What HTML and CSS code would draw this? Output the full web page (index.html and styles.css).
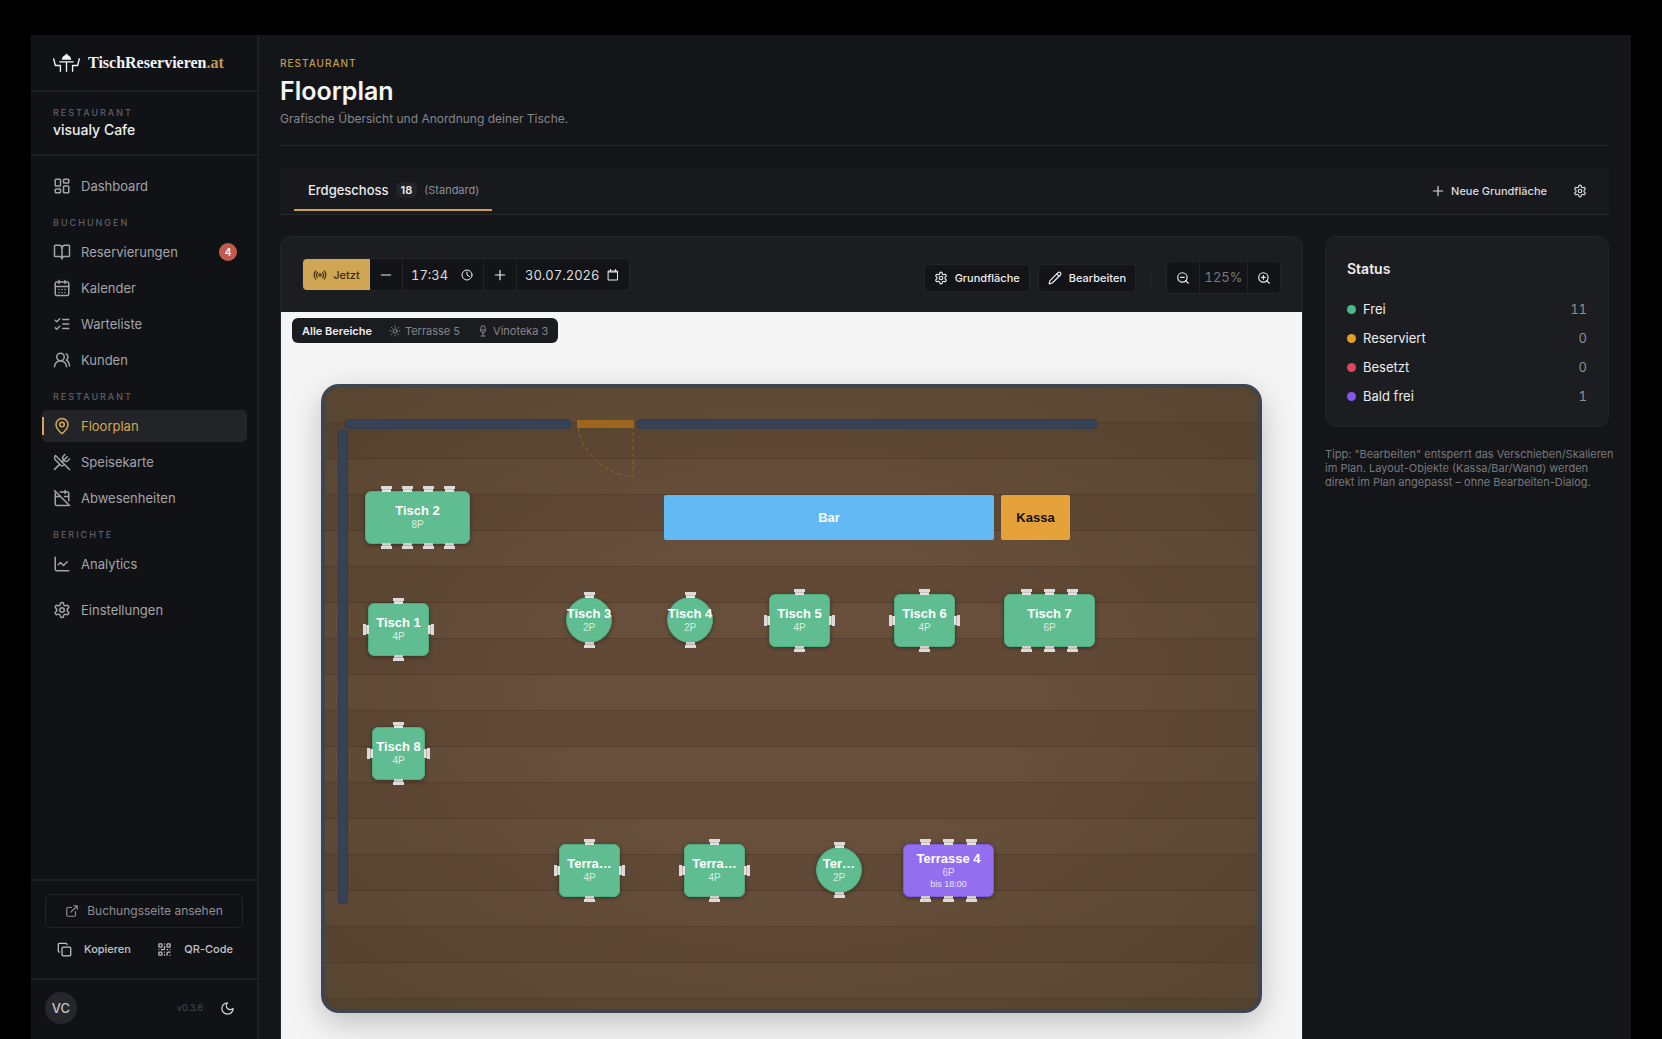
FILE: index.html
```html
<!DOCTYPE html>
<html lang="de">
<head>
    <meta charset="UTF-8">
    <meta name="viewport" content="width=device-width, initial-scale=1.0">
    <title>Floorplan - TischReservieren.at</title>
    <link rel="stylesheet" href="styles.css">
</head>
<body>

<!-- Icons -->
<svg class="sprite" aria-hidden="true">
    <symbol id="i-dashboard" viewBox="0 0 24 24"><rect x="3" y="3" width="7" height="9" rx="1"/><rect x="14" y="3" width="7" height="5" rx="1"/><rect x="14" y="12" width="7" height="9" rx="1"/><rect x="3" y="16" width="7" height="5" rx="1"/></symbol>
    <symbol id="i-book" viewBox="0 0 24 24"><path d="M12 7v14"/><path d="M3 18a1 1 0 0 1-1-1V4a1 1 0 0 1 1-1h5a4 4 0 0 1 4 4 4 4 0 0 1 4-4h5a1 1 0 0 1 1 1v13a1 1 0 0 1-1 1h-6a3 3 0 0 0-3 3 3 3 0 0 0-3-3z"/></symbol>
    <symbol id="i-calendar" viewBox="0 0 24 24"><path d="M8 2v4M16 2v4"/><rect x="3" y="4" width="18" height="18" rx="2"/><path d="M3 10h18M8 14h.01M12 14h.01M16 14h.01M8 18h.01M12 18h.01M16 18h.01"/></symbol>
    <symbol id="i-list" viewBox="0 0 24 24"><path d="m3 17 2 2 4-4M3 7l2 2 4-4M13 6h8M13 12h8M13 18h8"/></symbol>
    <symbol id="i-users" viewBox="0 0 24 24"><path d="M18 21a8 8 0 0 0-16 0"/><circle cx="10" cy="8" r="5"/><path d="M22 20c0-3.37-2-6.5-4-8a5 5 0 0 0-.45-8.3"/></symbol>
    <symbol id="i-pin" viewBox="0 0 24 24"><path d="M20 10c0 4.993-5.539 10.193-7.399 11.799a1 1 0 0 1-1.202 0C9.539 20.193 4 14.993 4 10a8 8 0 0 1 16 0"/><circle cx="12" cy="10" r="3"/></symbol>
    <symbol id="i-utensils" viewBox="0 0 24 24"><path d="m16 2-2.3 2.3a3 3 0 0 0 0 4.2l1.8 1.8a3 3 0 0 0 4.2 0L22 8"/><path d="M15 15 3.3 3.3a4.2 4.2 0 0 0 0 6l7.3 7.3c.7.7 2 .7 2.8 0L15 15Zm0 0 7 7"/><path d="m2.100 21.800 6.400-6.300M19 5l-7 7"/></symbol>
    <symbol id="i-calendar-off" viewBox="0 0 24 24"><path d="M4.200 4.200A2 2 0 0 0 3 6v14a2 2 0 0 0 2 2h14a2 2 0 0 0 1.820-1.180M21 15.500V6a2 2 0 0 0-2-2H9.500M16 2v4M3 10h7M21 10h-5.500M2 2l20 20"/></symbol>
    <symbol id="i-chart" viewBox="0 0 24 24"><path d="M3 3v16a2 2 0 0 0 2 2h16"/><path d="m19 9-5 5-4-4-3 3"/></symbol>
    <symbol id="i-settings" viewBox="0 0 24 24"><path d="M12.220 2h-.44a2 2 0 0 0-2 2v.18a2 2 0 0 1-1 1.730l-.43.25a2 2 0 0 1-2 0l-.15-.08a2 2 0 0 0-2.730.73l-.22.38a2 2 0 0 0 .73 2.730l.15.1a2 2 0 0 1 1 1.720v.51a2 2 0 0 1-1 1.740l-.15.09a2 2 0 0 0-.73 2.730l.22.38a2 2 0 0 0 2.730.73l.15-.08a2 2 0 0 1 2 0l.43.25a2 2 0 0 1 1 1.730V20a2 2 0 0 0 2 2h.44a2 2 0 0 0 2-2v-.18a2 2 0 0 1 1-1.730l.43-.25a2 2 0 0 1 2 0l.15.08a2 2 0 0 0 2.730-.73l.22-.39a2 2 0 0 0-.73-2.730l-.15-.08a2 2 0 0 1-1-1.740v-.5a2 2 0 0 1 1-1.740l.15-.09a2 2 0 0 0 .73-2.730l-.22-.38a2 2 0 0 0-2.730-.73l-.15.08a2 2 0 0 1-2 0l-.43-.25a2 2 0 0 1-1-1.730V4a2 2 0 0 0-2-2z"/><circle cx="12" cy="12" r="3"/></symbol>
    <symbol id="i-external" viewBox="0 0 24 24"><path d="M15 3h6v6M10 14 21 3M18 13v6a2 2 0 0 1-2 2H5a2 2 0 0 1-2-2V8a2 2 0 0 1 2-2h6"/></symbol>
    <symbol id="i-copy" viewBox="0 0 24 24"><rect x="8" y="8" width="14" height="14" rx="2"/><path d="M4 16c-1.100 0-2-.9-2-2V4c0-1.100.9-2 2-2h10c1.100 0 2 .9 2 2"/></symbol>
    <symbol id="i-qr" viewBox="0 0 24 24"><rect x="3" y="3" width="5" height="5" rx="1"/><rect x="16" y="3" width="5" height="5" rx="1"/><rect x="3" y="16" width="5" height="5" rx="1"/><path d="M21 16h-3a2 2 0 0 0-2 2v3M21 21v.01M12 7v3a2 2 0 0 1-2 2H7M3 12h.01M12 3h.01M12 16v.01M16 12h1M21 12v.01M12 21v-1"/></symbol>
    <symbol id="i-moon" viewBox="0 0 24 24"><path d="M12 3a6 6 0 0 0 9 9 9 9 0 1 1-9-9"/></symbol>
    <symbol id="i-plus" viewBox="0 0 24 24"><path d="M4 12h16M12 4v16"/></symbol>
    <symbol id="i-minus" viewBox="0 0 24 24"><path d="M4 12h16"/></symbol>
    <symbol id="i-live" viewBox="0 0 24 24"><path d="M4.900 19.100C1 15.200 1 8.800 4.900 4.900M7.800 16.200c-2.300-2.300-2.300-6.100 0-8.500M16.200 7.800c2.300 2.300 2.300 6.100 0 8.500M19.100 4.900C23 8.800 23 15.100 19.100 19"/><circle cx="12" cy="12" r="2"/></symbol>
    <symbol id="i-clock" viewBox="0 0 24 24"><circle cx="12" cy="12" r="10"/><path d="M12 6v6l5 3"/></symbol>
    <symbol id="i-date" viewBox="0 0 24 24"><path d="M3 4h18v18H3zM3 6h18M7 1v4M17 1v4"/></symbol>
    <symbol id="i-pencil" viewBox="0 0 24 24"><path d="M21.170 6.810a1 1 0 0 0-3.990-3.990L3.840 16.170a2 2 0 0 0-.5.83l-1.320 4.350a.5.5 0 0 0 .62.62l4.350-1.320a2 2 0 0 0 .83-.5z"/><path d="m15 5 4 4"/></symbol>
    <symbol id="i-zoom-out" viewBox="0 0 24 24"><circle cx="11" cy="11" r="8"/><path d="m21 21-4.350-4.350M8 11h6"/></symbol>
    <symbol id="i-zoom-in" viewBox="0 0 24 24"><circle cx="11" cy="11" r="8"/><path d="m21 21-4.350-4.350M11 8v6M8 11h6"/></symbol>
    <symbol id="i-sun" viewBox="0 0 24 24"><circle cx="12" cy="12" r="4"/><path d="M12 2v2M12 20v2M4.930 4.930l1.410 1.410M17.660 17.660l1.410 1.410M2 12h2M20 12h2M6.340 17.660l-1.410 1.410M19.070 4.930l-1.410 1.410"/></symbol>
    <symbol id="i-wine" viewBox="0 0 24 24"><path d="M8 22h8M7 10h10M12 15v7M12 15a5 5 0 0 0 5-5c0-2-.5-4-2-8H9c-1.500 4-2 6-2 8a5 5 0 0 0 5 5Z"/></symbol>
</svg>

<div class="app">
    <aside class="sidebar">
        <a class="brand" href="#">
            <svg class="brand-icon" viewBox="0 0 80 56" aria-hidden="true">
                <path d="M2 17 7 37H22V54M78 17 73 37H58V54M20 26H60M40 26V54" fill="none" stroke="currentColor" stroke-width="4" stroke-linecap="round" stroke-linejoin="round"/>
                <path d="M26 20a14 14 0 0 1 28 0z"/>
                <circle cx="40" cy="5" r="3"/>
            </svg>
            <span>TischReservieren<span class="brand-tld">.at</span></span>
        </a>
        <div class="location">
            <div class="label">Restaurant</div>
            <div class="location-name">visualy Cafe</div>
        </div>
        <nav class="nav">
            <a class="nav-item" href="#"><svg class="icon"><use href="#i-dashboard"/></svg>Dashboard</a>
            <div class="label">Buchungen</div>
            <a class="nav-item" href="#"><svg class="icon"><use href="#i-book"/></svg>Reservierungen<span class="count">4</span></a>
            <a class="nav-item" href="#"><svg class="icon"><use href="#i-calendar"/></svg>Kalender</a>
            <a class="nav-item" href="#"><svg class="icon"><use href="#i-list"/></svg>Warteliste</a>
            <a class="nav-item" href="#"><svg class="icon"><use href="#i-users"/></svg>Kunden</a>
            <div class="label">Restaurant</div>
            <a class="nav-item active" href="#"><svg class="icon"><use href="#i-pin"/></svg>Floorplan</a>
            <a class="nav-item" href="#"><svg class="icon"><use href="#i-utensils"/></svg>Speisekarte</a>
            <a class="nav-item" href="#"><svg class="icon"><use href="#i-calendar-off"/></svg>Abwesenheiten</a>
            <div class="label">Berichte</div>
            <a class="nav-item" href="#"><svg class="icon"><use href="#i-chart"/></svg>Analytics</a>
            <a class="nav-item nav-settings" href="#"><svg class="icon"><use href="#i-settings"/></svg>Einstellungen</a>
        </nav>
        <div class="share">
            <a class="booking-link" href="#"><svg class="icon"><use href="#i-external"/></svg>Buchungsseite ansehen</a>
            <div class="share-row">
                <button type="button"><svg class="icon"><use href="#i-copy"/></svg>Kopieren</button>
                <button type="button"><svg class="icon"><use href="#i-qr"/></svg>QR-Code</button>
            </div>
        </div>
        <div class="account">
            <span class="avatar">VC</span>
            <span class="version">v0.3.6</span>
            <button type="button" class="theme" aria-label="Design wechseln"><svg class="icon"><use href="#i-moon"/></svg></button>
        </div>
    </aside>

    <main class="main">
        <header class="page-header">
            <div class="eyebrow">Restaurant</div>
            <h1>Floorplan</h1>
            <p>Grafische Übersicht und Anordnung deiner Tische.</p>
        </header>

        <div class="tabs">
            <button type="button" class="tab">Erdgeschoss <span class="tab-count">18</span> <span class="tab-note">(Standard)</span></button>
            <div class="tabs-actions">
                <button type="button"><svg class="icon"><use href="#i-plus"/></svg>Neue Grundfläche</button>
                <button type="button" aria-label="Einstellungen"><svg class="icon"><use href="#i-settings"/></svg></button>
            </div>
        </div>

        <div class="content">
            <section class="plan">
                <div class="toolbar">
                    <div class="time-group">
                        <button type="button" class="now"><svg class="icon"><use href="#i-live"/></svg>Jetzt</button>
                        <button type="button" class="step" aria-label="Früher"><svg class="icon"><use href="#i-minus"/></svg></button>
                        <label class="field field-time"><input type="text" value="17:34" aria-label="Uhrzeit"><svg class="icon"><use href="#i-clock"/></svg></label>
                        <button type="button" class="step" aria-label="Später"><svg class="icon"><use href="#i-plus"/></svg></button>
                        <label class="field field-date"><input type="text" value="30.07.2026" aria-label="Datum"><svg class="icon"><use href="#i-date"/></svg></label>
                    </div>
                    <div class="tools">
                        <button type="button" class="tool"><svg class="icon"><use href="#i-settings"/></svg>Grundfläche</button>
                        <button type="button" class="tool"><svg class="icon"><use href="#i-pencil"/></svg>Bearbeiten</button>
                        <span class="divider"></span>
                        <div class="zoom">
                            <button type="button" aria-label="Verkleinern"><svg class="icon"><use href="#i-zoom-out"/></svg></button>
                            <span class="zoom-value">125%</span>
                            <button type="button" aria-label="Vergrößern"><svg class="icon"><use href="#i-zoom-in"/></svg></button>
                        </div>
                    </div>
                </div>

                <div class="canvas">
                    <div class="areas">
                        <button type="button" class="selected">Alle Bereiche</button>
                        <button type="button"><svg class="icon"><use href="#i-sun"/></svg>Terrasse 5</button>
                        <button type="button"><svg class="icon"><use href="#i-wine"/></svg>Vinoteka 3</button>
                    </div>

                    <div class="floor">
                        <div class="wall wall-top-left"></div>
                        <div class="wall wall-top-right"></div>
                        <div class="wall wall-left"></div>
                        <svg class="door" viewBox="0 0 58 58" aria-hidden="true">
                            <rect x="0" y="0" width="57" height="8" fill="#9c661e"/>
                            <path d="M1 8C5 32 28 56 56 56V8" fill="none" stroke="#8a6228" stroke-width="1" stroke-dasharray="4 3"/>
                        </svg>

                        <div class="object bar">Bar</div>
                        <div class="object kassa">Kassa</div>

                        <!-- Innenbereich -->
                        <div class="table t2">
                            <span class="chairs top"><i></i><i></i><i></i><i></i></span>
                            <span class="chairs bottom"><i></i><i></i><i></i><i></i></span>
                            <b>Tisch 2</b><span>8P</span>
                        </div>
                        <div class="table t1">
                            <span class="chairs top"><i></i></span><span class="chairs bottom"><i></i></span>
                            <span class="chairs left"><i></i></span><span class="chairs right"><i></i></span>
                            <b>Tisch 1</b><span>4P</span>
                        </div>
                        <div class="table round t3">
                            <span class="chairs top"><i></i></span><span class="chairs bottom"><i></i></span>
                            <b>Tisch 3</b><span>2P</span>
                        </div>
                        <div class="table round t4">
                            <span class="chairs top"><i></i></span><span class="chairs bottom"><i></i></span>
                            <b>Tisch 4</b><span>2P</span>
                        </div>
                        <div class="table t5">
                            <span class="chairs top"><i></i></span><span class="chairs bottom"><i></i></span>
                            <span class="chairs left"><i></i></span><span class="chairs right"><i></i></span>
                            <b>Tisch 5</b><span>4P</span>
                        </div>
                        <div class="table t6">
                            <span class="chairs top"><i></i></span><span class="chairs bottom"><i></i></span>
                            <span class="chairs left"><i></i></span><span class="chairs right"><i></i></span>
                            <b>Tisch 6</b><span>4P</span>
                        </div>
                        <div class="table wide t7">
                            <span class="chairs top"><i></i><i></i><i></i></span>
                            <span class="chairs bottom"><i></i><i></i><i></i></span>
                            <b>Tisch 7</b><span>6P</span>
                        </div>
                        <div class="table t8">
                            <span class="chairs top"><i></i></span><span class="chairs bottom"><i></i></span>
                            <span class="chairs left"><i></i></span><span class="chairs right"><i></i></span>
                            <b>Tisch 8</b><span>4P</span>
                        </div>

                        <!-- Terrasse -->
                        <div class="table terrace-1">
                            <span class="chairs top"><i></i></span><span class="chairs bottom"><i></i></span>
                            <span class="chairs left"><i></i></span><span class="chairs right"><i></i></span>
                            <b>Terra…</b><span>4P</span>
                        </div>
                        <div class="table terrace-2">
                            <span class="chairs top"><i></i></span><span class="chairs bottom"><i></i></span>
                            <span class="chairs left"><i></i></span><span class="chairs right"><i></i></span>
                            <b>Terra…</b><span>4P</span>
                        </div>
                        <div class="table round terrace-3">
                            <span class="chairs top"><i></i></span><span class="chairs bottom"><i></i></span>
                            <b>Ter…</b><span>2P</span>
                        </div>
                        <div class="table wide soon terrace-4">
                            <span class="chairs top"><i></i><i></i><i></i></span>
                            <span class="chairs bottom"><i></i><i></i><i></i></span>
                            <b>Terrasse 4</b><span>6P</span><small>bis 18:00</small>
                        </div>
                    </div>
                </div>
            </section>

            <aside class="side">
                <div class="status">
                    <h2>Status</h2>
                    <ul>
                        <li><span class="dot free"></span>Frei<span class="value">11</span></li>
                        <li><span class="dot reserved"></span>Reserviert<span class="value">0</span></li>
                        <li><span class="dot busy"></span>Besetzt<span class="value">0</span></li>
                        <li><span class="dot soon-free"></span>Bald frei<span class="value">1</span></li>
                    </ul>
                </div>
                <p class="tip">Tipp: "Bearbeiten" entsperrt das Verschieben/Skalieren im Plan. Layout-Objekte (Kassa/Bar/Wand) werden direkt im Plan angepasst – ohne Bearbeiten-Dialog.</p>
            </aside>
        </div>
    </main>
</div>

</body>
</html>
```

FILE: styles.css
```css
* {
    box-sizing: border-box;
}
body {
    margin: 0;
    padding: 35px 31px 0;
    background: #000;
    color: #ededee;
    font-family: Inter, "Liberation Sans", sans-serif;
    font-size: 13px;
    line-height: 16px;
}
h1, h2, p, ul {
    margin: 0;
    padding: 0;
}
a {
    color: inherit;
    text-decoration: none;
}
button {
    display: flex;
    align-items: center;
    justify-content: center;
    margin: 0;
    padding: 0;
    border: none;
    background: none;
    color: inherit;
    font: inherit;
    cursor: pointer;
}
.sprite {
    display: none;
}
.icon {
    flex: none;
    width: 16px;
    height: 16px;
    fill: none;
    stroke: currentColor;
    stroke-width: 2;
    stroke-linecap: round;
    stroke-linejoin: round;
}
.app {
    display: flex;
    height: calc(100vh - 35px);
    overflow: hidden;
    background: #141519;
}

/* Sidebar */
.sidebar {
    display: flex;
    flex-direction: column;
    flex: none;
    width: 228px;
    background: #111216;
    border-right: 2px solid #1e1f23;
}
.brand {
    display: flex;
    align-items: center;
    gap: 8px;
    height: 57px;
    padding: 0 21px 0 22px;
    border-bottom: 2px solid #1e1f23;
    color: #f2f2f3;
    font-family: "Liberation Serif", serif;
    font-size: 16px;
    font-weight: bold;
}
.brand-icon {
    width: 27px;
    height: 19px;
    fill: currentColor;
}
.brand-tld {
    color: #c39a4c;
}
.label {
    color: #5f6065;
    font-size: 9px;
    font-weight: 500;
    line-height: 14px;
    letter-spacing: 2px;
    text-transform: uppercase;
}
.location {
    height: 64px;
    padding: 14px 22px 0;
    border-bottom: 2px solid #1e1f23;
}
.location-name {
    font-size: 14px;
    font-weight: 500;
    line-height: 20px;
}
.nav {
    flex: 1;
    padding: 14px 10px 0 11px;
}
.nav .label {
    margin: 14px 11px 6px;
}
.nav-item {
    position: relative;
    display: flex;
    align-items: center;
    gap: 10px;
    height: 32px;
    padding: 0 10px 0 11px;
    border-radius: 5px;
    color: #a3a4a8;
}
.nav-item + .nav-item {
    margin-top: 4px;
}
.nav-item.nav-settings {
    margin-top: 14px;
}
.nav-item .icon {
    width: 18px;
    height: 18px;
}
.nav-item.active {
    background: #232428;
    color: #d4a853;
}
.nav-item.active::before {
    content: "";
    position: absolute;
    left: 0;
    top: 7px;
    bottom: 7px;
    width: 2px;
    background: #d4a853;
}
.count {
    width: 18px;
    margin-left: auto;
    border-radius: 9px;
    background: #c15b4d;
    color: #fff;
    font-size: 10px;
    font-weight: 600;
    line-height: 18px;
    text-align: center;
}
.share {
    padding: 13px 14px 0;
    height: 99px;
    border-top: 2px solid #1e1f23;
}
.booking-link {
    display: flex;
    align-items: center;
    justify-content: center;
    gap: 8px;
    height: 34px;
    border: 1px solid #232428;
    border-radius: 6px;
    color: #8e8f93;
    font-size: 12px;
}
.booking-link .icon {
    width: 14px;
    height: 14px;
}
.share-row {
    display: flex;
    justify-content: space-between;
    padding: 0 10px 0 12px;
    color: #c3c4c7;
    font-size: 11px;
    font-weight: 500;
}
.share-row button {
    gap: 12px;
    height: 42px;
}
.share-row .icon,
.theme .icon {
    width: 15px;
    height: 15px;
}
.account {
    display: flex;
    align-items: center;
    padding: 12px 22px 15px 14px;
    border-top: 2px solid #1e1f23;
}
.avatar {
    width: 32px;
    border-radius: 16px;
    background: #26272b;
    color: #c3c4c7;
    font-weight: 500;
    line-height: 32px;
    text-align: center;
}
.version {
    margin-left: auto;
    color: #4a4b50;
    font-size: 9px;
}
.theme {
    margin-left: 17px;
    color: #d5d6d8;
}

/* Main */
.main {
    display: flex;
    flex-direction: column;
    flex: 1;
    min-width: 0;
    padding: 20px 22px 0 21px;
}
.page-header {
    padding-bottom: 18px;
    border-bottom: 1px solid #232428;
}
.eyebrow {
    color: #c39a4c;
    font-size: 10px;
    font-weight: 500;
    letter-spacing: 1px;
    text-transform: uppercase;
}
h1 {
    color: #f5f5f6;
    font-size: 25px;
    font-weight: 600;
    line-height: 40px;
}
.page-header p {
    color: #85868a;
    font-size: 12px;
}
.tabs {
    display: flex;
    align-items: center;
    justify-content: space-between;
    height: 48px;
    margin: 21px 0;
    padding: 0 22px 0 14px;
    background: #18191d;
    border-bottom: 1px solid #28292d;
}
.tab {
    align-self: stretch;
    gap: 7px;
    margin-bottom: 3px;
    padding: 4px 13px 0 14px;
    border-bottom: 2px solid #c9a052;
    font-weight: 500;
}
.tab-count {
    padding: 0 5px;
    border-radius: 5px;
    background: #232428;
    font-size: 11px;
    font-weight: 600;
}
.tab-note {
    color: #8e8f93;
    font-size: 11px;
    font-weight: 400;
}
.tabs-actions {
    display: flex;
    gap: 26px;
    color: #dcdcde;
    font-size: 11px;
    font-weight: 500;
}
.tabs-actions button {
    gap: 6px;
}
.tabs-actions .icon {
    width: 14px;
    height: 14px;
}
.content {
    display: grid;
    grid-template-columns: 1fr 284px;
    gap: 22px;
    flex: 1;
    min-height: 0;
}
.plan {
    display: flex;
    flex-direction: column;
    min-width: 0;
    border: 1px solid #232428;
    border-bottom: none;
    border-radius: 11px 11px 0 0;
    background: #1c1d21;
}
.toolbar {
    display: flex;
    align-items: flex-start;
    justify-content: space-between;
    padding: 21px 21px 16px;
}
.time-group,
.zoom {
    display: flex;
    height: 33px;
    border: 1px solid #232428;
    border-radius: 5px;
    background: #131418;
    overflow: hidden;
}
.now {
    gap: 6px;
    width: 67px;
    background: #d0a553;
    color: #3a2c12;
    font-size: 11px;
    font-weight: 500;
}
.step {
    width: 32px;
}
.step .icon,
.now .icon {
    width: 14px;
    height: 14px;
}
.field {
    display: flex;
    align-items: center;
    gap: 8px;
    padding: 0 10px 0 8px;
    border-left: 1px solid #232428;
}
.field-time {
    width: 82px;
    border-right: 1px solid #232428;
}
.field-date {
    width: 113px;
}
.field .icon {
    width: 12px;
    height: 12px;
}
.field input {
    flex: 1;
    width: 0;
    min-width: 0;
    padding: 0;
    border: none;
    outline: none;
    background: none;
    color: #dcdcde;
    font: inherit;
    font-variant-numeric: tabular-nums;
}
.tools {
    display: flex;
    align-items: center;
    gap: 8px;
    height: 39px;
    margin-bottom: -1px;
}
.tool {
    gap: 7px;
    height: 28px;
    padding: 0 9px;
    border: 1px solid #232428;
    border-radius: 5px;
    background: #131418;
    font-size: 11px;
    font-weight: 500;
}
.tool .icon,
.zoom .icon {
    width: 14px;
    height: 14px;
}
.divider {
    width: 1px;
    height: 18px;
    margin: 0 6px 0 7px;
    background: #232428;
}
.zoom button {
    width: 32px;
}
.zoom-value {
    width: 49px;
    border: solid #232428;
    border-width: 0 1px;
    color: #77787c;
    line-height: 31px;
    text-align: center;
    font-variant-numeric: tabular-nums;
}

/* Floorplan */
.canvas {
    position: relative;
    flex: 1;
    min-height: 0;
    padding: 72px 40px 26px;
    background: #f5f5f5;
    overflow: hidden;
}
.areas {
    position: absolute;
    top: 6px;
    left: 11px;
    display: flex;
    gap: 17px;
    height: 25px;
    padding: 0 10px;
    border-radius: 6px;
    background: #1b1c20;
    color: #85868a;
    font-size: 11px;
}
.areas .selected {
    color: #ededee;
    font-weight: 600;
}
.areas button {
    gap: 4px;
}
.areas .icon {
    width: 12px;
    height: 12px;
}
.floor {
    position: relative;
    height: 629px;
    border: 4px solid #3e4450;
    border-radius: 18px;
    background:
        radial-gradient(ellipse farthest-corner, rgba(64, 54, 32, 0) 35%, rgba(64, 54, 32, 0.4)),
        linear-gradient(#573f2e 1px, #614936 1px, #614936 36px, #573f2e 36px, #573f2e 37px, #674f3b 37px) 0 34px / 100% 72px;
    box-shadow: 0 10px 32px rgba(0, 0, 0, 0.22);
    font-family: "Liberation Sans", Arial, sans-serif;
}
.wall {
    position: absolute;
    border: 1px solid #323b4b;
    border-radius: 3px;
    background: #384257;
}
.wall-top-left {
    left: 20px;
    top: 31px;
    width: 226px;
    height: 10px;
}
.wall-top-right {
    left: 312px;
    top: 31px;
    width: 460px;
    height: 10px;
}
.wall-left {
    left: 13px;
    top: 42px;
    width: 10px;
    height: 474px;
}
.door {
    position: absolute;
    left: 252px;
    top: 32px;
    width: 58px;
    height: 58px;
}
.object {
    position: absolute;
    display: flex;
    align-items: center;
    justify-content: center;
    border-radius: 2px;
    font-weight: bold;
}
.bar {
    left: 339px;
    top: 107px;
    width: 330px;
    height: 45px;
    background: #63b9f4;
    color: #f2f9ff;
}
.kassa {
    left: 676px;
    top: 107px;
    width: 69px;
    height: 45px;
    background: #e5a23a;
    color: #15110a;
}
.table {
    position: absolute;
    display: flex;
    flex-direction: column;
    align-items: center;
    justify-content: center;
    width: 61px;
    height: 53px;
    border: 1px solid #4fae80;
    border-radius: 6px;
    background: #5fbd91;
    box-shadow: 0 1px 4px rgba(0, 0, 0, 0.4);
    color: rgba(255, 255, 255, 0.75);
    font-size: 10px;
    line-height: 13px;
}
.table b {
    color: #fff;
    font-size: 13px;
    line-height: 14px;
    white-space: nowrap;
}
.table small {
    font-size: 9px;
    line-height: 11px;
    color: rgba(255, 255, 255, 0.85);
}
.table.round {
    width: 46px;
    height: 46px;
    border-radius: 50%;
}
.table.wide {
    width: 91px;
}
.table.soon {
    border-color: #7e5ae0;
    background: #936ff0;
}
.chairs {
    position: absolute;
    display: flex;
    justify-content: center;
    gap: 12px;
}
.chairs.top,
.chairs.bottom {
    left: 0;
    right: 0;
}
.chairs.left,
.chairs.right {
    top: 0;
    bottom: 0;
    align-items: center;
}
.chairs.top {
    bottom: 100%;
}
.chairs.bottom {
    top: 100%;
}
.chairs.left {
    right: 100%;
}
.chairs.right {
    left: 100%;
}
/* chair: backrest outside, seat towards the table */
.chairs i {
    width: 11px;
    height: 6px;
    padding: 0 1px;
    border-top: 3px solid #dddbd9;
    background: linear-gradient(#c4c0bc 1px, #e6e4e2 1px) content-box;
}
.chairs.bottom i {
    border-top: none;
    border-bottom: 3px solid #dddbd9;
    background: linear-gradient(#d0cdca 2px, #b9b5b1 2px) content-box;
}
.chairs.left i,
.chairs.right i {
    width: 6px;
    height: 11px;
    padding: 1px 0;
    border: none;
}
.chairs.left i {
    border-left: 3px solid #dddbd9;
    background: linear-gradient(90deg, #b9b5b1 1px, #e6e4e2 1px) content-box;
}
.chairs.right i {
    border-right: 3px solid #dddbd9;
    background: linear-gradient(270deg, #b9b5b1 1px, #e6e4e2 1px) content-box;
}
.t2 {
    left: 40px;
    top: 103px;
    width: 105px;
}
.t2 .chairs {
    gap: 10px;
}
.t1 {
    left: 43px;
    top: 215px;
}
.t3 {
    left: 241px;
    top: 209px;
}
.t4 {
    left: 342px;
    top: 209px;
}
.t5 {
    left: 444px;
    top: 206px;
}
.t6 {
    left: 569px;
    top: 206px;
}
.t7 {
    left: 679px;
    top: 206px;
}
.t8 {
    left: 47px;
    top: 339px;
    width: 53px;
}
.terrace-1 {
    left: 234px;
    top: 456px;
}
.terrace-2 {
    left: 359px;
    top: 456px;
}
.terrace-3 {
    left: 491px;
    top: 459px;
}
.terrace-4 {
    left: 578px;
    top: 456px;
}

/* Status */
.status {
    padding: 22px 21px 20px;
    border: 1px solid #232428;
    border-radius: 11px;
    background: #1c1d21;
}
.status h2 {
    margin-bottom: 20px;
    font-size: 14px;
    font-weight: 600;
    line-height: 20px;
}
.status ul {
    display: grid;
    gap: 9px;
    list-style: none;
}
.status li {
    display: flex;
    align-items: center;
    gap: 7px;
    line-height: 20px;
}
.dot {
    width: 9px;
    height: 9px;
    border-radius: 50%;
}
.free {
    background: #4db88a;
}
.reserved {
    background: #e5a023;
}
.busy {
    background: #e04560;
}
.soon-free {
    background: #8557ee;
}
.value {
    margin-left: auto;
    color: #8e8f93;
    font-variant-numeric: tabular-nums;
}
.tip {
    margin: 20px -6px 0 0;
    color: #77787c;
    font-size: 11px;
    line-height: 14px;
}
```
